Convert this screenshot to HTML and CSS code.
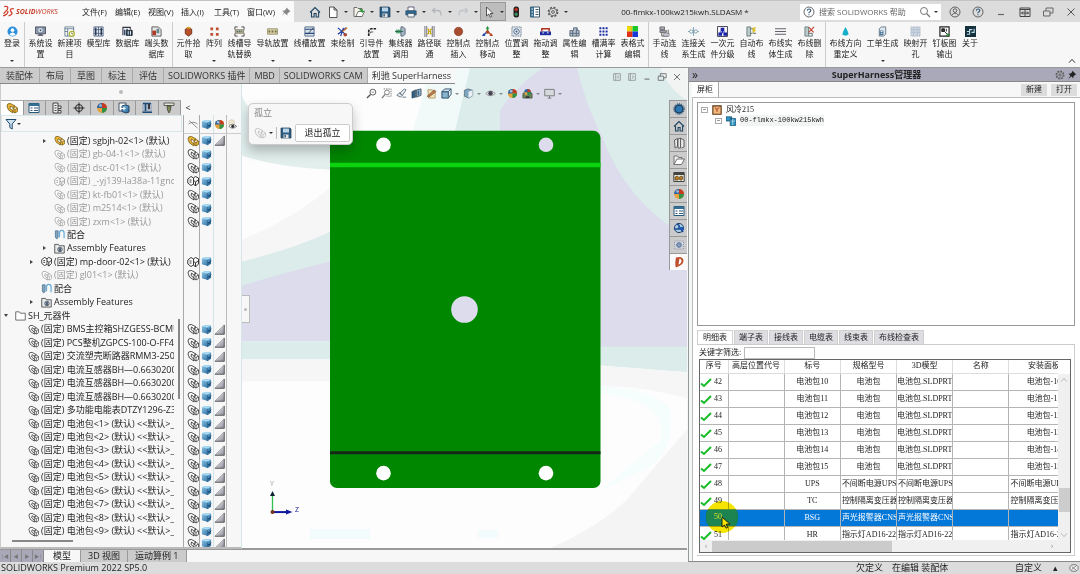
FILE: index.html
```html
<!DOCTYPE html>
<html lang="zh-CN">
<head>
    <meta charset="UTF-8">
    <meta name="viewport" content="width=device-width, initial-scale=1.0">
    <title>00-flmkx-100kw215kwh.SLDASM *</title>
    <link rel="stylesheet" href="styles.css">
</head>
<body>
    <svg class="sprite" aria-hidden="true">
        <defs>
            <linearGradient id="g-tri" x1="0" y1="0" x2="1" y2="1"><stop offset="0" stop-color="#fff"/><stop offset="1" stop-color="#8a8a98"/></linearGradient>
            <linearGradient id="g-blue" x1="0" y1="0" x2="1" y2="1"><stop offset="0" stop-color="#8fc8ea"/><stop offset="1" stop-color="#1f5f92"/></linearGradient>
        </defs>
        <!-- title bar -->
        <symbol id="i-home" viewBox="0 0 12 12"><path d="M1 6.500 6 1.500l5 5M2.500 6v5h2.600V7.500h2V11h2.500V6" fill="none" stroke="#1f4460" stroke-width="1.100"/></symbol>
        <symbol id="i-new" viewBox="0 0 12 12"><path d="M2.500 1h4.500l3 3v7.500h-7.500zM7 1v3h3" fill="#fff" stroke="#444" stroke-width=".9"/></symbol>
        <symbol id="i-open" viewBox="0 0 12 12"><path d="M1 1.500h3l1 1h4v8H1z" fill="#f4f4e8" stroke="#555" stroke-width=".8"/><path d="m3 10.500 2-5h6.500l-2.500 5z" fill="#fff" stroke="#555" stroke-width=".8"/><path d="M6 4q3-3 4 1l1.500-.5L9.500 7 7.500 5.500 9 5.300" fill="#2a9a3a"/></symbol>
        <symbol id="i-save" viewBox="0 0 12 12"><path d="M1 1h9l1 1v9H1z" fill="#2c5c82" stroke="#1c3850" stroke-width=".7"/><path d="M3 1.500h6v4H3z" fill="#b8d4e6"/><path d="M3.500 7.500h5V11h-5z" fill="#dde4ea"/><path d="M4.500 8h1.200v2.500H4.500z" fill="#234"/></symbol>
        <symbol id="i-print" viewBox="0 0 12 12"><path d="M3 1h6v4H3z" fill="#fff" stroke="#446" stroke-width=".8"/><path d="M.8 4.800h10.400V9H.8z" fill="#2d6a94" stroke="#1b3c58" stroke-width=".6"/><path d="M2.800 7.500h6.400V11H2.800z" fill="#eef4f8" stroke="#345" stroke-width=".7"/></symbol>
        <symbol id="i-undo" viewBox="0 0 12 12"><path d="M4 2 1.500 4.500 4 7M2 4.500h5q3.500.5 3 5" fill="none" stroke="#b4b8bc" stroke-width="1.300"/></symbol>
        <symbol id="i-redo" viewBox="0 0 12 12"><path d="m8 2 2.500 2.500L8 7M10 4.500H5Q1.500 5 2 9.500" fill="none" stroke="#c0c4c8" stroke-width="1.300"/></symbol>
        <symbol id="i-cursor" viewBox="0 0 12 12"><path d="M3.500 1v9l2.200-2 1.500 3.200 1.500-.7-1.500-3H10z" fill="#fff" stroke="#333" stroke-width=".8"/></symbol>
        <symbol id="i-light" viewBox="0 0 12 12"><rect x="3.500" y=".5" width="5.500" height="11" rx="2.500" fill="#222"/><circle cx="6.200" cy="3.500" r="1.700" fill="#c03020"/><circle cx="6.200" cy="8.300" r="1.700" fill="#3c8a5c"/></symbol>
        <symbol id="i-list" viewBox="0 0 12 12"><path d="M1.500 1h9v10h-9z" fill="#fff" stroke="#27485e" stroke-width=".9"/><path d="M1.500 1H5v10H1.500z" fill="#366b8c"/><path d="M6.500 3.500h3M6.500 6h3M6.500 8.500h3" stroke="#456"/><path d="M2.500 3h1.500M2.500 6h1.500M2.500 9h1.500" stroke="#fff"/></symbol>
        <symbol id="i-gear" viewBox="0 0 12 12"><circle cx="6" cy="6" r="4.600" fill="none" stroke="#555" stroke-width="1.500" stroke-dasharray="2 1.600"/><circle cx="6" cy="6" r="3.700" fill="none" stroke="#666" stroke-width=".8"/><circle cx="6" cy="6" r="1.400" fill="none" stroke="#555" stroke-width=".9"/></symbol>
        <symbol id="i-pin" viewBox="0 0 12 12"><path d="m6.500 1.500 4 4-1.300.4L7.500 7.600l-.3 2L4.500 7 2 10l2-3.500L2.300 4.700l2.300-.3 1.600-1.600z" fill="#888"/></symbol>
        <symbol id="i-pin-dark" viewBox="0 0 12 12"><path d="m6.500 1 4.500 4.500-1.500.4-1.700 1.700-.3 2.400L5 7.500 1.500 11 4 6.500 1.800 4.500l2.600-.3L6 2.800z" fill="#222"/></symbol>
        <symbol id="i-help" viewBox="0 0 12 12"><circle cx="6" cy="6" r="5" fill="none" stroke="#444" stroke-width=".8"/><path d="M4.300 4.700Q4.500 3 6.100 3t1.700 1.600Q7.700 5.600 6 6.500v.8M6 8.300v1" fill="none" stroke="#345a7c" stroke-width="1.100"/></symbol>
        <symbol id="i-user" viewBox="0 0 12 12"><circle cx="6" cy="6" r="5" fill="none" stroke="#555" stroke-width=".9"/><circle cx="6" cy="4.600" r="1.800" fill="none" stroke="#555" stroke-width=".9"/><path d="M2.500 9.300Q6 5 9.500 9.300" fill="none" stroke="#555" stroke-width=".9"/></symbol>
        <symbol id="i-search" viewBox="0 0 12 12"><circle cx="5" cy="5" r="3.500" fill="none" stroke="#777"/><path d="M7.500 7.500 11 11" stroke="#777" stroke-width="1.200"/></symbol>
        <symbol id="i-min" viewBox="0 0 12 12"><path d="M3 8.500h6" stroke="#666" stroke-width="1.200"/></symbol>
        <symbol id="i-span" viewBox="0 0 12 12"><path d="M1 2h10v8.500H1zM1 3.500h10M6 3.500v7M2.500 7h7M4 5.500 2.500 7 4 8.500M8 5.500 9.500 7 8 8.500" fill="none" stroke="#444"/></symbol>
        <symbol id="i-restore" viewBox="0 0 12 12"><path d="M1.500 5h6.500v5H1.500zM4 5V2h7v5H8" fill="none" stroke="#666"/></symbol>
        <symbol id="i-close" viewBox="0 0 12 12"><path d="m2.500 2.500 7 7M9.500 2.500l-7 7" stroke="#555"/></symbol>
        <symbol id="i-dockl" viewBox="0 0 12 12"><path d="M2 2h8v8H2zM4.500 2v8M8.500 4.300 6.500 6l2 1.700" fill="none" stroke="#888" stroke-width=".9"/></symbol>
        <symbol id="i-dockr" viewBox="0 0 12 12"><path d="M2 2h8v8H2zM4 2v8M6 4.300 8 6 6 7.700" fill="none" stroke="#888" stroke-width=".9"/></symbol>
        <symbol id="i-up" viewBox="0 0 12 12"><path d="m2.500 8 3.500-4 3.500 4" fill="none" stroke="#333" stroke-width="1.200"/></symbol>

        <!-- ribbon -->
        <symbol id="r-login" viewBox="0 0 12 12"><circle cx="6" cy="6" r="5.500" fill="#2c8fdc"/><circle cx="6" cy="4.500" r="2" fill="#fff"/><path d="M2.500 9.500Q6 4.500 9.500 9.500 6 12 2.500 9.500" fill="#fff"/></symbol>
        <symbol id="r-system" viewBox="0 0 12 12"><path d="M.5 1h11v7.500H.5z" fill="#8796a8" stroke="#334" stroke-width=".8"/><circle cx="6" cy="4.600" r="2.300" fill="#e4ebf4"/><circle cx="6" cy="4.600" r="1" fill="#456"/><path d="M2.500 11h7L7.500 8.500h-3z" fill="#667"/></symbol>
        <symbol id="r-project" viewBox="0 0 12 12"><path d="M1 1h9.500v10H1z" fill="#fff" stroke="#467" stroke-width=".8"/><path d="M1 3h9.500M4 3v8M1 6h3" stroke="#467" stroke-width=".8"/><circle cx="8.500" cy="8.500" r="2.800" fill="#fff" stroke="#a8b020" stroke-width="1.200"/><path d="m8.500 7 .1 1.700h1.300" stroke="#68740c" fill="none"/></symbol>
        <symbol id="r-models" viewBox="0 0 12 12"><path d="M1 1h10v10H1z" fill="#e0e8f2" stroke="#568"/><path d="M1 4h10M1 8h10M6 1v10" stroke="#568"/><path d="M3 2v8M9 2v8" stroke="#234" stroke-width="1.500"/></symbol>
        <symbol id="r-data" viewBox="0 0 12 12"><path d="M1 10V1.500h8V4" fill="none" stroke="#334" stroke-width="1.200"/><path d="M3 4v6M5.500 3v8M8 5v6M10.500 4v7" stroke="#246" stroke-width="1.500"/><path d="M5 5h6v5H5z" fill="none" stroke="#222"/></symbol>
        <symbol id="r-terminal" viewBox="0 0 12 12"><path d="M1 1h7l3 3v7H1z" fill="#e8e8e8" stroke="#555"/><path d="M1.500 5h4v5h-4z" fill="#b03828"/><path d="M6 3h3v5H6z" fill="#688"/></symbol>
        <symbol id="r-pick" viewBox="0 0 12 12"><path d="M2.500 3.500 6 2l3.500 1.500v5L6 11 2.500 8.500z" fill="#b8502c" stroke="#703018"/><path d="M4 1h4v2H4z" fill="#d8a020"/></symbol>
        <symbol id="r-array" viewBox="0 0 12 12"><path d="M1.500 1.500h3v3h-3zM7.500 1.500h3v3h-3zM1.500 7.500h3v3h-3zM7.500 7.500h3v3h-3z" fill="#c05030"/></symbol>
        <symbol id="r-replace" viewBox="0 0 12 12"><path d="M1 4V1h3M8 1h3v3M11 8v3H8M4 11H1V8" fill="none" stroke="#444"/><path d="M1.500 4h9v4h-9z" fill="#b8b890" stroke="#765" stroke-width=".7"/><path d="M3 6h6" stroke="#467" stroke-width="1.500" stroke-dasharray="1.500 1"/></symbol>
        <symbol id="r-rail" viewBox="0 0 12 12"><path d="M.5 3h11v6H.5z" fill="#d6cfa2" stroke="#8b8460" stroke-width=".8"/><path d="M1.500 6h9" stroke="#767050" stroke-width="2" stroke-dasharray="2 1.500"/></symbol>
        <symbol id="r-slot" viewBox="0 0 12 12"><path d="M1 1h10v10H1z" fill="#d8e4ec" stroke="#568"/><path d="M1 3.500h10M1 8h10" stroke="#247" stroke-width="1.200"/><path d="m4 9 6-7" stroke="#445"/></symbol>
        <symbol id="r-harness" viewBox="0 0 12 12"><path d="m1 2 9 8M1 9l9-7M4 11l3-9" fill="none" stroke="#1838a0" stroke-width="1.300"/><circle cx="9" cy="9.500" r="2" fill="#b04830"/><path d="m6 6 5-4" stroke="#d07020" stroke-width="1.500"/></symbol>
        <symbol id="r-guide" viewBox="0 0 12 12"><path d="M3 11V6q0-3 3-3h5" fill="none" stroke="#222" stroke-width="1.800" stroke-dasharray="3 1"/><path d="M5 8V6.500h3" fill="none" stroke="#555"/></symbol>
        <symbol id="r-hub" viewBox="0 0 12 12"><path d="M1 4h6v4H1z" fill="#56a87a"/><path d="M6.500 1h2.500l2 2v6l-2 2H6.500z" fill="#a6b8c8" stroke="#567"/><path d="M0 6h9" stroke="#286a48"/></symbol>
        <symbol id="r-path" viewBox="0 0 12 12"><path d="M1 0v12M3 0v12M9 0v12M11 0v12" stroke="#667"/><path d="M3 3.500h2v5h-2M9 3.500H7v5h2M5 6h2" fill="none" stroke="#c8a818" stroke-width="1.200"/></symbol>
        <symbol id="r-ctrladd" viewBox="0 0 12 12"><circle cx="6" cy="6" r="4.600" fill="#a84c30" stroke="#7a3018" stroke-width=".6"/></symbol>
        <symbol id="r-ctrlmove" viewBox="0 0 12 12"><path d="M6 6V2" stroke="#289038" stroke-width="1.600"/><path d="M4 3h4L6 0z" fill="#289038"/><path d="m6 6-4 3.500" stroke="#2848b0" stroke-width="1.600"/><path d="M0 11h4L1.500 8z" fill="#2848b0"/><path d="m6 6 4 3.500" stroke="#b84828" stroke-width="1.600"/><path d="M8 11h4l-1.500-3z" fill="#b84828"/><circle cx="6" cy="6.500" r="2" fill="#b04828"/></symbol>
        <symbol id="r-position" viewBox="0 0 12 12"><path d="M1 1h10v10H1z" fill="#dde6ee" stroke="#456" stroke-dasharray="1 1"/><circle cx="6" cy="6" r="3" fill="none" stroke="#568"/><circle cx="6" cy="6" r="1" fill="#357"/></symbol>
        <symbol id="r-drag" viewBox="0 0 12 12"><path d="M2 6V3h8v3" fill="none" stroke="#b03020" stroke-width="1.600"/><path d="M0 6h12v4H0z" fill="#1c2ca0"/><path d="M2.500 7.500h2M7.500 7.500h2" stroke="#fff"/></symbol>
        <symbol id="r-attr" viewBox="0 0 12 12"><path d="M1 5h4V2h4v3h2v6H1z" fill="#b8c4d0" stroke="#567"/><path d="M1 8h10M4 5v6M8 3v8" stroke="#567"/></symbol>
        <symbol id="r-fill" viewBox="0 0 12 12"><path d="M1 1h10v10H1z" fill="#fff"/><path d="M1.500 2.500h9M1.500 6h9M1.500 9.500h9" stroke="#1c2c9c" stroke-width="2.200" stroke-dasharray="2.200 1.200"/></symbol>
        <symbol id="r-grid" viewBox="0 0 12 12"><path d="M0 0h6v6H0z" fill="#e0c818"/><path d="M6 0h6v6H6z" fill="#18c828"/><path d="M0 6h6v6H0z" fill="#e03018"/><path d="M6 6h6v6H6z" fill="#1838d8"/><path d="M0 1h3v4H0z" fill="#f0e000"/></symbol>
        <symbol id="r-manual" viewBox="0 0 12 12"><path d="M1 1h5v3H1zM1 5h7v2H1z" fill="#aab" stroke="#555" stroke-width=".8"/><path d="M3 7v4h7V4" fill="none" stroke="#555"/><path d="M5 8h6v3H5z" fill="#ccd" stroke="#666" stroke-width=".6"/></symbol>
        <symbol id="r-link" viewBox="0 0 12 12"><path d="M0 6h3M9 6h3M6 1v10" stroke="#8ab" stroke-width="1.200"/><circle cx="3.500" cy="6" r="1.800" fill="#fff" stroke="#79a"/><circle cx="8.500" cy="6" r="1.800" fill="#fff" stroke="#79a"/></symbol>
        <symbol id="r-level" viewBox="0 0 12 12"><path d="M.6.6h10.800v10.800H.6z" fill="#fff" stroke="#334"/><path d="M4 2h4v3.500H4zM1.500 7h4v3.500h-4zM7 7h4v3.500H7z" fill="#1820a8"/><path d="M6 5v3M3 6.500h6" stroke="#1820a8"/></symbol>
        <symbol id="r-auto" viewBox="0 0 12 12"><path d="M1 1h4v10H1z" fill="#bcc" stroke="#566" stroke-width=".8"/><path d="M5 3h3v5h3M5 8h2" fill="none" stroke="#566"/><path d="m7 2 4-1-1.500 3 1.500.5L7.500 8z" fill="#e0c020"/></symbol>
        <symbol id="r-solid" viewBox="0 0 12 12"><path d="M0 3h12M0 6h12M0 9h12" stroke="#66606c" stroke-width="1.300"/></symbol>
        <symbol id="r-delete" viewBox="0 0 12 12"><path d="M1 1h4v10H1z" fill="#bcc" stroke="#566" stroke-width=".8"/><path d="M5 8h4v3H5" fill="none" stroke="#566"/><path d="m5.500 1.500 5 5.500M11 1 5 7" stroke="#c04030" stroke-width="1.200"/></symbol>
        <symbol id="r-direction" viewBox="0 0 12 12"><path d="M6 1q3.500 6 3.300 8.500L6 10.500l-3.300-1Q2.500 7 6 1" fill="#18b0c8"/></symbol>
        <symbol id="r-order" viewBox="0 0 12 12"><path d="M2.500 3 5 1h4.500v8L7 11H2.500z" fill="#dfe8ee" stroke="#678"/><path d="M3 5h4v5H3z" fill="#3b6e92"/><path d="M4 6h2M4 8h2" stroke="#fff"/></symbol>
        <symbol id="r-map" viewBox="0 0 12 12"><path d="M1 1h10v10H1z" fill="#cdd6e2" stroke="#9ab" stroke-dasharray="1 1"/><path d="M1 4h10M1 7h10M4 1v10M8 1v10" stroke="#aab8c8" stroke-width=".7"/></symbol>
        <symbol id="r-board" viewBox="0 0 12 12"><path d="M1 1h10v10H1z" fill="#fff" stroke="#222" stroke-width="1.300"/><path d="M3 3h3v3H3zM6 6l4 4M8 3v3" fill="#333" stroke="#222"/><path d="m7 11 5-.5L9.500 8z" fill="#288838"/></symbol>
        <symbol id="r-about" viewBox="0 0 12 12"><path d="M0 0h12v12H0z" fill="#16303c"/><path d="M2 9h3V4h3M2 6h3M7 7h3V3" fill="none" stroke="#b8dce8" stroke-width="1.200"/></symbol>

        <!-- feature tree -->
        <symbol id="t-part" viewBox="0 0 12 12"><path d="M1 4q0-3 3.500-2.500L9 4 6.500 5.500 4.500 4 4 6.500l3 2.500v2L2.500 8z" fill="var(--fill, #fff)" stroke="currentColor" stroke-width=".8"/><path d="m7 6 2.500-1.500L11.500 6v3.500L9 11 7 9.500zM7 6l2 1.500L11.500 6M9 7.500V11" fill="var(--fill, #fff)" stroke="currentColor" stroke-width=".7"/></symbol>
        <symbol id="t-asm" viewBox="0 0 12 12"><path d="M.8 4 4 1.500 6.500 3v6L4 10.500.8 8z" fill="var(--fill, #fff)" stroke="currentColor" stroke-width=".9"/><path d="m6.500 3 2-1.500 3 1.500v5l-3 3-2-2M6.500 5.500l2 1.300L11.500 5M8.500 7v4M2.500 5h2M2.500 7h2" fill="none" stroke="currentColor" stroke-width=".9"/></symbol>
        <symbol id="t-mate" viewBox="0 0 12 12"><path d="M1.500 2h3v7l-1.500 2-1.500-2z" fill="#84a4bc" stroke="#456f90" stroke-width=".8"/><path d="M6 9V4q0-2.500 2.500-2.500T11 4v6" fill="none" stroke="#62a8d8" stroke-width="1.300"/></symbol>
        <symbol id="t-feat" viewBox="0 0 12 12"><path d="M.8 1.500h4l1 1.500h5.400v8H.8z" fill="#e8e8e8" stroke="#444" stroke-width=".9"/><circle cx="6.500" cy="7" r="2.400" fill="#fff" stroke="#456"/><path d="M5 5.500v4h3v-4z" fill="#567"/></symbol>
        <symbol id="t-folder" viewBox="0 0 12 12"><path d="M.8 2h4l1 1.500h5.400v7.500H.8z" fill="#fff" stroke="#555" stroke-width=".9"/></symbol>
        <symbol id="t-cube" viewBox="0 0 12 12"><path d="m1 2.500 4-1.500 6 1v6.500L7.500 11 1 9z" fill="url(#g-blue)"/><path d="m1 2.500 6 1.500 4-2-6-1z" fill="#a8dcf4"/><path d="M7 4v7" stroke="#1d5a88" stroke-width=".6"/><path d="m7.500 6.500 1.200 1.500L11 5" fill="none" stroke="#153e60"/></symbol>
        <symbol id="t-tri" viewBox="0 0 12 12"><path d="M11 1v10H1z" fill="url(#g-tri)" stroke="#777" stroke-width=".5"/><path d="M1 11.300h10.300V1" fill="none" stroke="#333" stroke-width=".7"/></symbol>
        <symbol id="t-props" viewBox="0 0 12 12"><path d="M1 1.500h10v9H1z" fill="#fff" stroke="#245a7c"/><path d="M1 1.500h10V4H1z" fill="#336e94"/><path d="M2.500 6h2M2.500 8.500h2M6 6h4M6 8.500h4" stroke="#357"/></symbol>
        <symbol id="t-config" viewBox="0 0 12 12"><path d="M2 1h5v10H2zM3.500 3.500h2M3.500 6h2M3.500 8.500h2M7 4h3v2.500H7M7 8.500h3V11H7" fill="#eee" stroke="#333" stroke-width=".9"/></symbol>
        <symbol id="t-target" viewBox="0 0 12 12"><circle cx="6" cy="6" r="3.500" fill="none" stroke="#222"/><path d="M6 .5v11M.5 6h11" stroke="#222"/></symbol>
        <symbol id="t-ball" viewBox="0 0 12 12"><circle cx="6" cy="6" r="5" fill="#e6a23c"/><path d="M6 6V1a5 5 0 0 1 5 5z" fill="#c23b22"/><path d="M6 6h5a5 5 0 0 1-5 5z" fill="#2f9247"/><path d="M6 6H1a5 5 0 0 1 5-5z" fill="#2c66a8"/><circle cx="4.500" cy="3.500" r="1.300" fill="#fff" opacity=".6"/></symbol>
        <symbol id="t-cam" viewBox="0 0 12 12"><path d="M1 1h7v8H1z" fill="#fff" stroke="#456"/><path d="m4 4 3-1 4 1v6l-3 1-4-1.500z" fill="url(#g-blue)" stroke="#246"/><path d="M2 6.500h5M5.500 5 7 6.500 5.500 8" fill="none" stroke="#fff"/></symbol>
        <symbol id="t-tool" viewBox="0 0 12 12"><path d="M1 1h10v10H1z" fill="#a8b4c4"/><path d="M4.500 1v8M2 1.500h8M1.500 10.300h9.500" stroke="#1b4c78" stroke-width="1.500"/><path d="M8 2v5" stroke="#111" stroke-width="1.500"/></symbol>
        <symbol id="t-drill" viewBox="0 0 12 12"><path d="M1 1h10v2.500H1z" fill="#e4e4d0" stroke="#444" stroke-width=".8"/><path d="M4 4h4l-.5 4L6 11 4.500 8z" fill="#7c8c50" stroke="#333" stroke-width=".7"/></symbol>
        <symbol id="t-funnel" viewBox="0 0 12 12"><path d="M1 1.500h10L7.200 6v5L4.800 9.500V6z" fill="#cfe2f0" stroke="#1f4a70"/></symbol>
        <symbol id="t-hide" viewBox="0 0 12 12"><path d="M2 2.500 10.500 10M1.500 6Q6 2.500 10.500 6" fill="none" stroke="#777" stroke-width=".8"/></symbol>
        <symbol id="t-eye" viewBox="0 0 12 12"><circle cx="5" cy="4" r="3.200" fill="#ece6d2" stroke="#c9bf9e" stroke-width=".6"/><path d="M2 8q4-4.500 8.500 0Q6 12 2 8" fill="#fff" stroke="#555" stroke-width=".8"/><circle cx="6.300" cy="8" r="1.700" fill="#333"/></symbol>

        <!-- view toolbar and task pane -->
        <symbol id="v-zoom" viewBox="0 0 12 12"><circle cx="7.500" cy="4.500" r="3.200" fill="#fff" stroke="#555"/><path d="m5 7-4 4" stroke="#555" stroke-width="1.500"/><path d="M6 4.500h3" stroke="#888"/></symbol>
        <symbol id="v-area" viewBox="0 0 12 12"><path d="M3 1h8v8H6" fill="none" stroke="#777" stroke-dasharray="1.500 1"/><circle cx="6.500" cy="4.800" r="2.600" fill="#fff" stroke="#777"/><path d="m4.500 7-3.500 4" stroke="#777" stroke-width="1.400"/></symbol>
        <symbol id="v-prev" viewBox="0 0 12 12"><path d="m4 6 5-5 2 1-4 6zM1 8l3-3 3 3-2 2zM7 10h4" fill="#e8eef0" stroke="#678"/></symbol>
        <symbol id="v-section" viewBox="0 0 12 12"><path d="m1 4 4-2v8l-4 1z" fill="#345f80" stroke="#234" stroke-width=".6"/><path d="m6 2 5-1v7l-5 2z" fill="#8cb0c8" stroke="#345" stroke-width=".8"/><path d="M8 3v5" stroke="#246"/></symbol>
        <symbol id="v-note" viewBox="0 0 12 12"><path d="M2 2h5l3 3v6H3z" fill="#f0e4c0" stroke="#a88448" stroke-width=".8"/><path d="m1 9 8-7 2 2-8 6z" fill="#c87838" stroke="#555" stroke-width=".6"/></symbol>
        <symbol id="v-orient" viewBox="0 0 12 12"><path d="M1 4h7v7H1z" fill="#88b4cc" stroke="#246"/><path d="m1 4 3-3h7L8 4zM11 1v6l-3 4" fill="#d4e4ee" stroke="#246" stroke-width=".9"/></symbol>
        <symbol id="v-display" viewBox="0 0 12 12"><path d="m1.500 2.500 4-1.500 5 1.500v6l-4 2.500-5-2z" fill="#7da6c0" stroke="#567" stroke-width=".8"/><path d="M6 4v7l4.500-2.500v-6z" fill="#e8f0f4"/></symbol>
        <symbol id="v-eye" viewBox="0 0 12 12"><path d="M.8 6Q6 .5 11.200 6 6 11 .8 6" fill="#e8e8e8" stroke="#888" stroke-width=".9"/><circle cx="6" cy="5.800" r="2.400" fill="#445"/></symbol>
        <symbol id="v-scene" viewBox="0 0 12 12"><path d="M1 11V6l5-4 5 4v5z" fill="#6d8a58" stroke="#333" stroke-width=".7"/><circle cx="6" cy="4.500" r="3.500" fill="#2c66a8"/><path d="M6 4.500V1a3.500 3.500 0 0 1 3.500 3.500z" fill="#c23b22"/><path d="M2.500 4.500H6V8a3.500 3.500 0 0 1-3.500-3.500" fill="#e6a23c"/><path d="M6 4.500h3.500A3.500 3.500 0 0 1 6 8z" fill="#2f9247"/><path d="M4 11V9h4v2" fill="#333"/></symbol>
        <symbol id="v-monitor" viewBox="0 0 12 12"><path d="M.8 1.500h10.400v7H.8z" fill="#d4dade" stroke="#777"/><path d="M4 11h4M6 8.500V11" stroke="#777"/></symbol>
        <symbol id="p-ring" viewBox="0 0 12 12"><circle cx="6" cy="6" r="4" fill="#2b78b4" stroke="#173e60" stroke-width="1.500"/><circle cx="6" cy="6" r="5.300" fill="none" stroke="#1b4468" stroke-width="1" stroke-dasharray="1.200 1"/></symbol>
        <symbol id="p-books" viewBox="0 0 12 12"><path d="m1.500 3 3-1.500v8L2 11zM5 2l2.500-1v10H5zM8 1.500l3 1.500v7l-2.500 1" fill="#e8e8e8" stroke="#555" stroke-width=".9"/></symbol>
        <symbol id="p-folder" viewBox="0 0 12 12"><path d="M1 10.500V2h3.500l1 1.500H9V5" fill="#eee" stroke="#777"/><path d="M1 10.500 4 5h7.500l-3 5.500z" fill="#fff" stroke="#666" stroke-width=".9"/></symbol>
        <symbol id="p-pal" viewBox="0 0 12 12"><path d="M.8 1.500h10.400v9H.8z" fill="#f0ead8" stroke="#444"/><path d="M1 2h10v2H1z" fill="#444"/><path d="M2 9V6l2.500-1L6 6.500 8 5l2 1-1 3H7L6 7.500 5 9z" fill="#c07c1c" stroke="#333" stroke-width=".6"/></symbol>
        <symbol id="p-globe" viewBox="0 0 12 12"><circle cx="6" cy="6" r="4.600" fill="#a8cce4" stroke="#246"/><path d="M1 7h7l2 3M4 2q4 2 1 5" fill="none" stroke="#1c4c98" stroke-width="1.600"/><path d="M7 5h4v3H7z" fill="#225cb0"/></symbol>
        <symbol id="p-cloud" viewBox="0 0 12 12"><path d="M1.500 2h9v8h-9z" fill="#cdd4dc" stroke="#99a" stroke-dasharray="1 1"/><circle cx="6" cy="6" r="2.300" fill="#89b" stroke="#579"/></symbol>
        <symbol id="p-leaf" viewBox="0 0 12 12"><path d="M3 1.500Q9-.5 10.500 4 11 9 3 11.500 1.500 9 3 1.500" fill="#c0502c"/><path d="M6.500 2.500Q9.500 3.500 8 6.500 7 8.500 5.500 8.500z" fill="#fff"/></symbol>
        <symbol id="p-cab" viewBox="0 0 12 12"><path d="M1 1h10v10H1z" fill="#f0b87c" stroke="#5a3414" stroke-width="1.300"/><path d="m3.500 3 2.500 2.500L8.500 3M6 5.500V8" fill="none" stroke="#9c2c18" stroke-width="1.200"/></symbol>
        <symbol id="p-asm" viewBox="0 0 12 12"><path d="M0 1h7v5H0zM5 3h6.500v8.500H5z" fill="#2d98c8" stroke="#124c70" stroke-width=".9"/><path d="M5 6h6M8 3v8" stroke="#fff" stroke-width=".6"/></symbol>
        <symbol id="c-check" viewBox="0 0 12 12"><path d="m1 7.500 3 2.500L11 3" fill="none" stroke="#18bc28" stroke-width="2"/></symbol>
        <symbol id="s-ok" viewBox="0 0 12 12"><ellipse cx="6" cy="6" rx="5" ry="4" fill="#eee" stroke="#666"/><path d="M3 8 8.500 3.500M3.500 4.500l5 4" stroke="#777"/></symbol>
    </svg>

    <div class="app">
        <header class="titlebar">
            <div class="menubar">
                <span class="brand">
                    <svg class="brand-mark" viewBox="0 0 12 12"><path d="M2 1.500q4.500-1 3 2.500L1.500 8M1 10q4.500-1 4.500-4.500M11 3.500Q7 3 8 5.500q3 3.500-2 4.500" fill="none" stroke="#d0402c" stroke-width="1.200"/></svg>
                    <b>SOLID</b>WORKS
                </span>
                <nav class="menus">
                    <a href="#">文件(F)</a><a href="#">编辑(E)</a><a href="#">视图(V)</a><a href="#">插入(I)</a><a href="#">工具(T)</a><a href="#">窗口(W)</a>
                </nav>
                <svg class="icon"><use href="#i-pin"/></svg>
            </div>
            <div class="quick" id="quick"></div>
            <h1 class="doc-title">00-flmkx-100kw215kwh.SLDASM *</h1>
            <label class="search">
                <svg class="icon"><use href="#i-help"/></svg>
                <input type="text" placeholder="搜索 SOLIDWORKS 帮助" aria-label="搜索 SOLIDWORKS 帮助">
                <svg class="icon"><use href="#i-search"/></svg>
                <span class="caret"></span>
            </label>
            <div class="window-btns">
                <button aria-label="用户"><svg class="icon"><use href="#i-user"/></svg></button>
                <button aria-label="帮助"><svg class="icon"><use href="#i-help"/></svg></button>
                <button aria-label="最小化"><svg class="icon"><use href="#i-min"/></svg></button>
                <button aria-label="跨屏"><svg class="icon"><use href="#i-span"/></svg></button>
                <button aria-label="还原"><svg class="icon"><use href="#i-restore"/></svg></button>
                <button aria-label="关闭"><svg class="icon"><use href="#i-close"/></svg></button>
            </div>
        </header>

        <div class="ribbon">
            <div class="ribbon-groups" id="ribbon"></div>
            <button class="collapse" aria-label="折叠"><svg class="icon small"><use href="#i-up"/></svg></button>
        </div>

        <main class="body">
            <div class="workspace">
                <section class="viewport">
                    <svg class="scene" viewBox="242 68 445 481" preserveAspectRatio="none">
                        <path d="M242 68h445v481H242z" fill="#fdfdfd"/>
                        <!-- backdrop -->
                        <path d="M242 95q8 30 88 45v30q-50-2-88-14z" fill="#e2efed"/>
                        <path d="M242 240q50-20 88-52v60l-88 30z" fill="#f6f6f6"/>
                        <path d="M242 262q55-14 88-30v40l-88 25z" fill="#dcecea"/>
                        <path d="M242 286q40-12 88-24h270v80H242z" fill="#dcdcec"/>
                        <path d="M242 342h88v18h-88z" fill="#dcecea"/>
                        <path d="M242 360h88v22h-88z" fill="#f6f6f6"/>
                        <path d="M455 68h232v184H455z" fill="#dcecea"/>
                        <path d="M430 68h40l-15 63h-42z" fill="#f2faf9"/>
                        <path d="M543 68h34q10 40 24 66 24 68 86 104v112H500V110q20-28 43-42" fill="#dcdcec"/>
                        <path d="M660 68h27v32q-16-8-27-32" fill="#f2f4f4"/>
                        <path d="M600 347h87v26l-87-7z" fill="#dcecea"/>
                        <path d="M600 366l87 7v26q-40-12-87-12z" fill="#f6f6f6"/>
                        <path d="M600 387q50 2 70 22 6 40-20 58l-50 25 60-50q10-42-60-47z" fill="#f6fdfd"/>
                        <path d="M687 430q-34 40-56 66t-80 53h136z" fill="#f4f4f4"/>
                        <path d="M310 530h60v10h-60zM478 531h20v8h-20z" fill="#f2fcfc"/>
                        <!-- plate -->
                        <rect x="330" y="131" width="270.500" height="358" rx="7" fill="#008700"/>
                        <path d="M330 163h270.500v4.500H330z" fill="#0bd40e"/>
                        <path d="M330 452h270.500v3H330z" fill="#182818"/>
                        <g fill="#fff">
                            <circle cx="383.500" cy="145" r="7.300"/>
                            <circle cx="383.500" cy="474" r="7.300"/>
                            <circle cx="546" cy="474" r="7.300"/>
                        </g>
                        <circle cx="546" cy="145" r="7.300" fill="#dcdcec"/>
                        <circle cx="464.500" cy="310" r="13.300" fill="#dcdcec"/>
                        <!-- triad -->
                        <path d="M272.500 513v-17" stroke="#30c050" stroke-width="1.300"/>
                        <path d="m270 497 2.500-5 2.500 5z" fill="#123"/>
                        <path d="M272.500 513H287" stroke="#1018a0" stroke-width="2"/>
                        <path d="m286 510.500 6.500 2.500-6.500 2.500z" fill="#1018a0"/>
                        <circle cx="272.500" cy="513" r="2" fill="#732"/>
                        <text x="295" y="513" class="axis axis-z">Z</text>
                        <text x="270" y="487" class="axis">Y</text>
                    </svg>

                    <div class="doc-btns">
                        <button aria-label="左停靠"><svg class="icon small"><use href="#i-dockl"/></svg></button>
                        <button aria-label="右停靠"><svg class="icon small"><use href="#i-dockr"/></svg></button>
                        <button aria-label="最小化"><svg class="icon small"><use href="#i-min"/></svg></button>
                        <button aria-label="还原"><svg class="icon small"><use href="#i-restore"/></svg></button>
                        <button aria-label="关闭"><svg class="icon small"><use href="#i-close"/></svg></button>
                    </div>
                    <div class="view-tools" id="view-tools"></div>

                    <div class="isolate">
                        <h2>孤立</h2>
                        <div class="isolate-row">
                            <svg class="icon faint"><use href="#t-part"/></svg>
                            <span class="caret"></span>
                            <span class="rule"></span>
                            <svg class="icon"><use href="#i-save"/></svg>
                            <button class="isolate-exit">退出孤立</button>
                        </div>
                    </div>

                    <button class="pane-handle" aria-label="展开"></button>
                    <nav class="task-pane" id="task-pane"></nav>
                </section>

                <nav class="tabs">
                    <a href="#">装配体</a><a href="#">布局</a><a href="#">草图</a><a href="#">标注</a><a href="#">评估</a><a href="#" class="tight">SOLIDWORKS 插件</a><a href="#" class="tight">MBD</a><a href="#" class="tight">SOLIDWORKS CAM</a><a href="#" class="tight active">利驰 SuperHarness</a>
                </nav>

                <aside class="tree-panel">
                    <div class="grip"></div>
                    <div class="tree-tabs" id="tree-tabs"></div>
                    <div class="tree-head">
                        <button class="filter" aria-label="过滤"><svg class="icon"><use href="#t-funnel"/></svg><span class="caret"></span></button>
                        <div class="flags">
                            <svg class="icon"><use href="#t-hide"/></svg>
                            <svg class="icon"><use href="#t-cube"/></svg>
                            <svg class="icon"><use href="#t-ball"/></svg>
                            <svg class="icon"><use href="#t-eye"/></svg>
                        </div>
                    </div>
                    <div class="tree" id="tree"></div>
                    <div class="tree-foot">
                        <div class="tree-hscroll"></div>
                        <div class="flags">
                            <svg class="icon"><use href="#t-part"/></svg>
                            <svg class="icon"><use href="#t-cube"/></svg>
                            <svg class="icon"><use href="#t-tri"/></svg>
                        </div>
                    </div>
                    <div class="tree-vscroll"></div>
                </aside>

                <nav class="sheet-tabs">
                    <button aria-label="第一个">|◀</button><button aria-label="上一个">◀</button><button aria-label="下一个">▶</button><button aria-label="最后一个">▶|</button>
                    <a href="#" class="active">模型</a><a href="#">3D 视图</a><a href="#">运动算例 1</a>
                </nav>
            </div>

            <aside class="manager">
                <header class="manager-head">
                    <span>»</span>
                    <h2>SuperHarness管理器</h2>
                    <svg class="icon small"><use href="#i-gear"/></svg>
                    <svg class="icon small"><use href="#i-pin-dark"/></svg>
                </header>
                <div class="manager-bar">
                    <a href="#" class="cabinet-tab">屏柜</a>
                    <button>新建</button>
                    <button>打开</button>
                </div>
                <div class="manager-body">
                    <ul class="cabinets">
                        <li><span class="box"></span><svg class="icon small"><use href="#p-cab"/></svg>风冷215
                            <ul>
                                <li><span class="box"></span><svg class="icon small"><use href="#p-asm"/></svg><span class="code">00-flmkx-100kw215kwh</span></li>
                            </ul>
                        </li>
                    </ul>
                    <nav class="list-tabs">
                        <a href="#" class="active">明细表</a><a href="#">端子表</a><a href="#">接线表</a><a href="#">电缆表</a><a href="#">线束表</a><a href="#">布线检查表</a>
                    </nav>
                    <div class="list-page">
                        <div class="keyword">
                            <label for="keyword">关键字筛选:</label>
                            <input type="text" id="keyword">
                        </div>
                        <div class="sheet">
                            <div class="sheet-view">
                                <table>
                                    <thead>
                                        <tr><th class="c-no">序号</th><th>高层位置代号</th><th>标号</th><th>规格型号</th><th>3D模型</th><th>名称</th><th class="c-panel">安装面板</th></tr>
                                    </thead>
                                    <tbody id="parts"></tbody>
                                </table>
                            </div>
                            <div class="vbar"><svg class="icon small faint"><use href="#i-up"/></svg><span></span><svg class="icon small faint flip"><use href="#i-up"/></svg></div>
                            <div class="hbar"><i>‹</i><span></span><i>›</i></div>
                            <div class="pointer">
                                <svg viewBox="0 0 32 32"><path d="M2 8.500h28q2 3.500 2 7.500 0 5.500-2.500 9h-27Q0 21.500 0 16q0-4 2-7.500" fill="#1c8450"/><path d="M16 16v10l2.500-2 1.500 3.200 1.700-.8-1.500-3.200H24z" fill="#f4e400" stroke="#111" stroke-width=".9"/></svg>
                                <b>50</b>
                            </div>
                        </div>
                    </div>
                </div>
            </aside>
        </main>

        <footer class="status">
            <span class="product">SOLIDWORKS Premium 2022 SP5.0</span>
            <span>欠定义</span>
            <span class="mode">在编辑 装配体</span>
            <span>自定义</span>
            <span class="up">▴</span>
            <svg class="icon small"><use href="#s-ok"/></svg>
        </footer>
    </div>
    <script src="script.js"></script>
</body>
</html>
```

FILE: styles.css
```css
:root {
    --chrome: #dcdcdc;
    --panel: #f7f7f7;
    --tab: #cbcbcb;
    --line: #a9a9a9;
    --text: #222;
    --muted: #999;
    --select: #0478d8;
    --ui: "Open Sans", "Noto Sans CJK SC", sans-serif;
    --song: "Liberation Serif", "Noto Sans CJK SC", serif;
}

* {
    margin: 0;
    padding: 0;
    box-sizing: border-box;
}

body {
    font-family: var(--ui);
    font-size: 9px;
    line-height: 12px;
    color: var(--text);
    background: var(--panel);
    overflow: hidden;
}

a {
    color: inherit;
    text-decoration: none;
}

button {
    font: inherit;
    color: inherit;
    border: none;
    background: none;
}

input {
    font: inherit;
    border: none;
    outline: none;
    min-width: 0;
}

.sprite {
    position: absolute;
    width: 0;
    height: 0;
}

.icon {
    width: 12px;
    height: 12px;
    flex: none;
    display: block;
}

.icon.small {
    width: 10px;
    height: 10px;
}

.icon.faint {
    opacity: 0.3;
}

.caret {
    border: 2px solid transparent;
    border-top-color: #333;
    border-bottom: none;
    flex: none;
}

.app {
    height: 100vh;
    display: grid;
    grid-template-rows: 22px 46px minmax(0, 1fr) 12px;
}

/* title bar */
.titlebar {
    display: flex;
    align-items: center;
    background: var(--chrome);
    border-top: 1px solid #c4c4c4;
    font-size: 8px;
}

.menubar {
    display: flex;
    align-items: center;
    align-self: stretch;
    width: 294px;
    padding-left: 2px;
    background: #fafafa;
}

.brand {
    display: flex;
    align-items: center;
    width: 80px;
    color: #c8402c;
    font-size: 7px;
    font-style: italic;
}

.brand-mark {
    width: 13px;
    height: 13px;
    margin-right: 1px;
}

.menus {
    display: flex;
    flex: 1;
}

.menus a {
    width: 33px;
    white-space: nowrap;
}

.menubar .icon {
    margin-right: 2px;
}

.quick {
    display: flex;
    align-items: center;
    align-self: stretch;
    padding-left: 11px;
}

.quick button {
    display: flex;
    align-items: center;
    justify-content: center;
    gap: 5px;
    width: 26px;
    height: 19px;
}

.quick button.plain {
    width: 19px;
}

.quick button.on {
    background: #bdbdbd;
    border: 1px solid #999;
}

.doc-title {
    flex: 1;
    font-size: 8px;
    font-weight: 400;
    text-align: center;
}

.search {
    display: flex;
    align-items: center;
    gap: 3px;
    width: 141px;
    height: 16px;
    padding: 0 3px;
    background: #fff;
}

.search input {
    flex: 1;
    padding-left: 1px;
}

.search input::placeholder {
    color: #666;
}

.window-btns {
    display: flex;
    justify-content: space-between;
    width: 128px;
    margin: 0 3px 0 8px;
}

/* ribbon */
.ribbon {
    display: flex;
    align-items: flex-end;
    justify-content: space-between;
    background: var(--panel);
    border-bottom: 1px solid #9a9a9a;
    font-size: 8px;
    line-height: 11px;
}

.ribbon-groups {
    display: flex;
    height: 100%;
}

.group {
    display: flex;
    padding: 0 1px;
    border-right: 1px solid #ccc;
}

.group:last-child {
    border-right: none;
}

.cmd {
    display: flex;
    flex-direction: column;
    align-items: center;
    width: 29px;
    padding: 4px 0 5px;
}

.cmd.narrow {
    width: 22px;
}

.cmd.wide {
    width: 37px;
}

.cmd .caret {
    margin-top: auto;
}

.cmd .icon {
    width: 11px;
    height: 11px;
}

.collapse {
    padding: 0 3px 1px;
}

/* workspace */
.body {
    display: grid;
    grid-template-columns: minmax(0, 1fr) 393px;
}

.workspace {
    display: grid;
    grid-template-columns: 242px minmax(0, 1fr);
    grid-template-rows: 16px minmax(0, 1fr) 13px;
    min-height: 0;
}

.viewport {
    grid-column: 2;
    grid-row: 1 / 3;
    position: relative;
    border-bottom: 1px solid #999;
    min-height: 0;
}

.scene {
    position: absolute;
    width: 100%;
    height: 100%;
}

.axis {
    font-size: 7px;
    fill: #999;
}

.axis-z {
    fill: #1018a0;
}

.tabs {
    grid-column: 1 / 3;
    grid-row: 1;
    display: flex;
    justify-self: start;
    position: relative;
    background: var(--tab);
    border-bottom: 1px solid #888;
    line-height: 15px;
    white-space: nowrap;
}

.tabs a {
    padding: 0 6px;
    border-right: 1px solid #aaa;
    color: #333;
}

.tabs a.tight {
    padding: 0 4px;
}

.tabs a.active {
    background: var(--panel);
    border-right: none;
}

.doc-btns {
    position: absolute;
    top: 4px;
    right: 5px;
    display: flex;
    gap: 5px;
}

.view-tools {
    position: absolute;
    top: 20px;
    left: 124px;
    display: flex;
    align-items: center;
    gap: 4px;
}

.view-tools button {
    display: flex;
    align-items: center;
    gap: 3px;
}

.view-tools .icon {
    width: 11px;
    height: 11px;
}

.view-tools .caret {
    border-top-color: #888;
}

.isolate {
    position: absolute;
    top: 35px;
    left: 6px;
    width: 105px;
    padding: 3px 2px 2px 5px;
    background: var(--panel);
    border: 1px solid #ccc;
    border-radius: 5px;
    box-shadow: 0 6px 12px rgba(0, 0, 0, 0.25);
}

.isolate h2 {
    font-size: 9px;
    font-weight: 400;
    color: #888;
    margin-bottom: 5px;
}

.isolate-row {
    display: flex;
    align-items: center;
    gap: 3px;
}

.isolate .rule {
    width: 1px;
    height: 12px;
    background: #bbb;
}

.isolate-exit {
    flex: 1;
    height: 18px;
    background: #fff;
    border: 1px solid #ccc;
    border-radius: 2px;
    white-space: nowrap;
}

.pane-handle {
    position: absolute;
    top: 227px;
    left: 0;
    width: 8px;
    height: 28px;
    background: var(--panel);
    border: 1px solid #bbb;
    border-left: none;
}

.pane-handle::after {
    content: "";
    display: block;
    width: 3px;
    height: 3px;
    margin: auto;
    border-radius: 50%;
    background: #bbb;
}

.task-pane {
    position: absolute;
    top: 32px;
    right: 0;
    width: 18px;
    border-left: 1px solid #999;
}

.task-pane button {
    display: flex;
    align-items: center;
    justify-content: center;
    width: 100%;
    height: 17px;
    background: var(--tab);
    border-top: 1px solid #999;
}

.task-pane button:last-child {
    background: #fafafa;
}

/* feature tree */
.tree-panel {
    grid-column: 1;
    grid-row: 2;
    position: relative;
    display: flex;
    flex-direction: column;
    min-height: 0;
    background: var(--panel);
    border-left: 1px solid #ccc;
    border-right: 1px solid #d4e8ea;
    border-bottom: 2px solid #bbb;
}

.grip {
    height: 16px;
    display: flex;
    align-items: center;
    justify-content: center;
}

.grip::after {
    content: "";
    width: 4px;
    height: 4px;
    border-radius: 50%;
    background: #bbb;
}

.tree-tabs {
    display: flex;
    width: 194px;
    height: 15px;
}

.tree-tabs button {
    flex: 1;
    display: flex;
    align-items: center;
    justify-content: center;
    background: var(--tab);
    border-top: 1px solid #aaa;
    border-right: 1px solid #999;
}

.tree-tabs button:first-child {
    background: #fff;
}

.tree-tabs button:last-child {
    flex: none;
    width: 14px;
    background: none;
    border: none;
}

.tree-head,
.row,
.tree-foot {
    display: flex;
    justify-content: space-between;
}

.tree-head {
    height: 19px;
}

.filter {
    display: flex;
    align-items: center;
    width: 181px;
    height: 17px;
    padding-left: 3px;
    border: 1px solid #d8e8ea;
}

.flags {
    display: flex;
    align-items: center;
    gap: 2px;
    width: 58px;
    padding-left: 3px;
    border-left: 1px solid var(--line);
    background: linear-gradient(var(--line), var(--line)) 15px 0 / 1px 100% no-repeat, linear-gradient(#d4e4e6, #d4e4e6) 29px 0 / 1px 100% no-repeat, linear-gradient(#bbb, #bbb) 42px 0 / 1px 100% no-repeat;
}

.tree-head .flags {
    border-bottom: 1px solid #ccc;
}

.flags .icon:nth-child(n + 2) {
    width: 11px;
    height: 11px;
}

.tree {
    flex: 1;
    min-height: 0;
    display: grid;
    grid-auto-rows: minmax(0, 1fr);
}

.row {
    min-width: 0;
}

.node {
    display: flex;
    align-items: center;
    gap: 2px;
    width: 173px;
    overflow: hidden;
    white-space: nowrap;
}

.node .icon {
    width: 11px;
    height: 11px;
}

.node.lv0 { padding-left: 3px; }
.node.lv1 { padding-left: 16px; }
.node.lv2 { padding-left: 29px; }
.node.lv3 { padding-left: 42px; }

.node.off {
    color: var(--muted);
}

.gold {
    color: #6b5410;
    --fill: #f0b838;
}

.twist {
    display: flex;
    width: 9px;
    flex: none;
}

.twist.right::before {
    content: "";
    border: 2px solid transparent;
    border-left: 3px solid #444;
    border-right: none;
}

.twist.down::before {
    content: "";
    border: 2px solid transparent;
    border-top: 3px solid #444;
    border-bottom: none;
}

.tree-foot {
    height: 9px;
    overflow: hidden;
}

.tree-foot .flags {
    align-items: flex-start;
}

.tree-hscroll {
    width: 61px;
    height: 2px;
    margin: 2px 0 0 11px;
    background: #888;
}

.tree-vscroll {
    position: absolute;
    top: 235px;
    left: 177px;
    width: 2px;
    height: 80px;
    background: #888;
}

.sheet-tabs {
    grid-column: 1 / 3;
    grid-row: 3;
    display: flex;
    border-top: 1px solid #999;
    white-space: nowrap;
}

.sheet-tabs button {
    width: 11px;
    background: #a8a8b8;
    border-right: 1px solid #888;
    color: #777;
    font-size: 5px;
}

.sheet-tabs a {
    padding: 0 7px;
    background: var(--tab);
    border-right: 1px solid #999;
}

.sheet-tabs a.active {
    padding: 0 9px;
    background: var(--panel);
}

/* manager */
.manager {
    display: flex;
    flex-direction: column;
    min-height: 0;
    margin-left: 1px;
    padding-left: 3px;
    border-left: 1px solid #999;
    border-bottom: 1px solid #888;
    background: #f4f7f7;
    font-family: var(--song);
    font-size: 8px;
}

.manager-head {
    display: flex;
    align-items: center;
    gap: 2px;
    height: 14px;
    margin-left: -3px;
    padding: 0 3px;
    background: #a9a9b9;
    border-bottom: 1px solid #888;
    font-family: var(--ui);
    font-size: 12px;
}

.manager-head h2 {
    flex: 1;
    font-size: 9px;
    text-align: center;
}

.manager-bar {
    display: flex;
    align-items: center;
    gap: 4px;
    height: 16px;
    padding-right: 3px;
    background: var(--panel);
    border-bottom: 1px solid #bbb;
}

.cabinet-tab {
    align-self: stretch;
    width: 27px;
    margin-right: auto;
    border-right: 1px solid #aaa;
    background: #fff;
    line-height: 16px;
    text-align: center;
}

.manager-bar button {
    width: 26px;
    height: 12px;
    background: var(--chrome);
}

.manager-body {
    flex: 1;
    display: flex;
    flex-direction: column;
    min-height: 0;
    padding: 4px 5px 5px 4px;
    border-left: 1px solid #bbb;
    background: #fff;
}

.cabinets {
    flex: 1;
    padding: 1px 3px;
    border: 1px solid #999;
    list-style: none;
}

.cabinets ul {
    flex-basis: 100%;
    padding-left: 14px;
    list-style: none;
}

.cabinets li {
    display: flex;
    flex-wrap: wrap;
    align-items: center;
    gap: 0 4px;
    line-height: 11px;
}

.cabinets .box {
    width: 7px;
    height: 6px;
    border: 1px solid #aaa;
    background: linear-gradient(#999, #999) center / 3px 1px no-repeat;
}

.code {
    font-family: "Liberation Mono", monospace;
    font-size: 7px;
    background: #f2f4f4;
}

.list-tabs {
    display: flex;
    gap: 1px;
    height: 14px;
    margin-top: 4px;
}

.list-tabs a {
    padding: 0 4px;
    background: #dedee2;
    border: 1px solid #d0d0d0;
    border-bottom: none;
    line-height: 13px;
}

.list-tabs a.active {
    padding: 0 5px;
    background: #fff;
}

.list-page {
    padding: 2px 3px 2px 2px;
    border: 1px solid #ccc;
    border-left: none;
}

.keyword {
    display: flex;
    gap: 3px;
}

.keyword input {
    width: 71px;
    height: 12px;
    border: 1px solid #bbb;
}

.sheet {
    position: relative;
    display: grid;
    grid-template-columns: minmax(0, 1fr) 12px;
    grid-template-rows: 180px 12px;
    border: 1px solid #666;
}

.sheet-view {
    overflow: hidden;
}

.sheet table {
    width: 106%;
    table-layout: fixed;
    border-collapse: collapse;
}

.sheet th,
.sheet td {
    height: 17px;
    border: 1px solid #b4b4b4;
    border-top: none;
    border-left: none;
    font-weight: 400;
    text-align: center;
    white-space: nowrap;
    overflow: hidden;
}

.sheet th {
    height: 13px;
    border-color: #ddd;
}

.sheet .c-no {
    width: 28px;
}

.sheet .c-panel {
    width: 70px;
}

.sheet td.long {
    text-align: left;
    padding-left: 1px;
}

.no {
    display: flex;
    align-items: center;
    gap: 2px;
}

.sheet tr.picked td {
    background: var(--select);
    color: #fff;
}

.vbar {
    display: flex;
    flex-direction: column;
    align-items: center;
    padding-top: 15px;
    background: linear-gradient(#fff 14px, #f0f0f0 14px);
}

.vbar span {
    width: 11px;
    height: 24px;
    margin: auto 0 18px;
    background: #cdcdcd;
}

.flip {
    transform: rotate(180deg);
}

.hbar {
    grid-column: 1 / 3;
    display: flex;
    align-items: center;
    background: #f0f0f0;
    color: #888;
}

.hbar i {
    width: 12px;
    text-align: center;
    font-style: normal;
}

.hbar span {
    width: 180px;
    height: 11px;
    background: #cbcbcb;
    margin-right: auto;
}

.hbar i:last-child {
    margin-right: 12px;
}

.pointer {
    position: absolute;
    top: 141px;
    left: 6px;
    width: 32px;
    height: 32px;
}

.pointer::before {
    content: "";
    position: absolute;
    inset: 0;
    border-radius: 50%;
    background: #f4e400;
    mix-blend-mode: multiply;
}

.pointer svg {
    position: absolute;
    inset: 0;
}

.pointer b {
    position: absolute;
    top: 10px;
    left: 8px;
    color: #d8e020;
    font-weight: 400;
}

/* status bar */
.status {
    display: flex;
    align-items: center;
    gap: 9px;
    padding: 0 1px;
    background: var(--chrome);
    white-space: nowrap;
}

.product {
    flex: 1;
}

.mode {
    width: 114px;
}

.status .up {
    padding: 0 2px;
}
```

FILE: script.js
```js
const icon = (id, cls = '') => `<svg class="icon ${cls}"><use href="#${id}"/></svg>`;
const caret = '<span class="caret"></span>';

// name, has a drop-down arrow
const quick = [
    ['home', false], ['new', true], ['open', true], ['save', true], ['print', true],
    ['undo', true], ['redo', true], ['cursor', true], ['light', false], ['list', false], ['gear', true]
];

// label, icon, width class, has a drop-down arrow
const ribbon = [
    [['登录', 'login', 'narrow', true]],
    [['系统设置', 'system'], ['新建项目', 'project'], ['模型库', 'models'], ['数据库', 'data'], ['端头数据库', 'terminal']],
    [
        ['元件拾取', 'pick'], ['阵列', 'array', 'narrow', true], ['线槽导轨替换', 'replace'],
        ['导轨放置', 'rail', 'wide', true], ['线槽放置', 'slot', 'wide', true], ['束绘制', 'harness', '', true],
        ['引导件放置', 'guide'], ['集线器调用', 'hub'], ['路径联通', 'path'], ['控制点插入', 'ctrladd'],
        ['控制点移动', 'ctrlmove'], ['位置调整', 'position'], ['拖动调整', 'drag'], ['属性编辑', 'attr'],
        ['槽满率计算', 'fill'], ['表格式编辑', 'grid']
    ],
    [['手动连线', 'manual'], ['连接关系生成', 'link'], ['一次元件分级', 'level'], ['自动布线', 'auto'], ['布线实体生成', 'solid'], ['布线删除', 'delete']],
    [['布线方向重定义', 'direction', 'wide'], ['工单生成', 'order', 'wide', true], ['映射开孔', 'map'], ['钉板图输出', 'board'], ['关于', 'about', 'narrow']]
];

// text, level, icon, state, flag icons, twist
const tree = [
    ['(固定) sgbjh-02<1> (默认)', 3, 'part', 'gold', 'part cube tri', 'right'],
    ['(固定) gb-04-1<1> (默认)', 3, 'part', 'off', 'part cube'],
    ['(固定) dsc-01<1> (默认)', 3, 'part', 'off', 'part cube'],
    ['(固定) _-yj139-la38a-11gnd', 3, 'asm', 'off', 'asm cube'],
    ['(固定) kt-fb01<1> (默认)', 3, 'part', 'off', 'part cube'],
    ['(固定) m2514<1> (默认)', 3, 'part', 'off', 'part cube'],
    ['(固定) zxm<1> (默认)', 3, 'part', 'off', 'part cube'],
    ['配合', 3, 'mate', '', ''],
    ['Assembly Features', 3, 'feat', '', '', 'right'],
    ['(固定) mp-door-02<1> (默认)', 2, 'asm', '', 'asm cube', 'right'],
    ['(固定) gl01<1> (默认)', 2, 'part', 'off', 'part cube'],
    ['配合', 2, 'mate', '', ''],
    ['Assembly Features', 2, 'feat', '', '', 'right'],
    ['SH_元器件', 0, 'folder', '', '', 'down']
];

['BMS主控箱SHZGESS-BCMU', 'PCS整机ZGPCS-100-O-FF4S', '交流塑壳断路器RMM3-250S',
    '电流互感器BH—0.66302005', '电流互感器BH—0.66302005', '电流互感器BH—0.66302005',
    '多功能电能表DTZY1296-Z32'].forEach(name => tree.push([`(固定) ${name}`, 1, 'part', '', 'part cube tri']));

for (let i = 1; i <= 9; i++) {
    tree.push([`(固定) 电池包<${i}> (默认) <<默认>_`, 1, 'part', '', 'part cube tri']);
}

// number, tag, model, 3D file, panel
const parts = [];
for (let i = 0; i < 6; i++) {
    parts.push([42 + i, `电池包${10 + i}`, '电池包', '电池包.SLDPRT', `电池包-${10 + i}`]);
}
parts.push([48, 'UPS', '不间断电源UPS', '不间断电源UPS', '不间断电源UPS']);
parts.push([49, 'TC', '控制隔离变压器', '控制隔离变压器', '控制隔离变压器']);
parts.push([50, 'BSG', '声光报警器CNS', '声光报警器CNS', '']);
parts.push([51, 'HR', '指示灯AD16-22', '指示灯AD16-22', '指示灯AD16-22']);

const escapeHtml = text => text.replace(/</g, '&lt;').replace(/>/g, '&gt;');
const fill = (id, html) => { document.getElementById(id).innerHTML = html; };

fill('quick', quick.map(([name, drop]) => {
    const cls = name === 'cursor' ? 'on' : drop ? '' : 'plain';
    return `<button class="${cls}" aria-label="${name}">${icon('i-' + name)}${drop ? caret : ''}</button>`;
}).join(''));

fill('ribbon', ribbon.map(group => `<div class="group">${group.map(([label, id, cls = '', drop]) =>
    `<button class="cmd ${cls}">${icon('r-' + id)}<span>${label}</span>${drop ? caret : ''}</button>`).join('')}</div>`).join(''));

fill('view-tools', [['v-zoom'], ['v-area'], ['v-prev'], ['v-section'], ['v-note'], ['v-orient', 1], ['v-display', 1], ['v-eye', 1], ['t-ball'], ['v-scene', 1], ['v-monitor', 1]]
    .map(([id, drop]) => `<button aria-label="${id}">${icon(id)}${drop ? caret : ''}</button>`).join(''));

fill('task-pane', ['p-ring', 'i-home', 'p-books', 'p-folder', 'p-pal', 't-ball', 't-props', 'p-globe', 'p-cloud', 'p-leaf']
    .map(id => `<button aria-label="${id}">${icon(id)}</button>`).join(''));

fill('tree-tabs', ['t-part', 't-props', 't-config', 't-target', 't-ball', 't-cam', 't-tool', 't-drill']
    .map((id, i) => `<button aria-label="${id}">${icon(id, i ? '' : 'gold')}</button>`).join('') + '<button>&lt;</button>');

fill('tree', tree.map(([text, level, id, state, flags, twist = '']) => {
    const gold = state === 'gold' ? 'gold' : '';
    const flagIcons = flags.split(' ').filter(Boolean).map((f, i) => icon('t-' + f, i ? '' : gold)).join('');
    return `<div class="row"><div class="node lv${level} ${state === 'off' ? 'off' : ''}"><span class="twist ${twist}"></span>${icon('t-' + id, gold)}<span>${escapeHtml(text)}</span></div><div class="flags">${flagIcons}</div></div>`;
}).join(''));

fill('parts', parts.map(([no, tag, model, file, panel]) => {
    const picked = no === 50;
    const long = no > 47 ? 'long' : '';
    return `<tr class="${picked ? 'picked' : ''}"><td><span class="no">${picked ? '' : icon('c-check') + no}</span></td><td></td><td>${tag}</td><td class="${long}">${model}</td><td class="${long}">${file}</td><td></td><td class="${long}">${panel}</td></tr>`;
}).join(''));
```
